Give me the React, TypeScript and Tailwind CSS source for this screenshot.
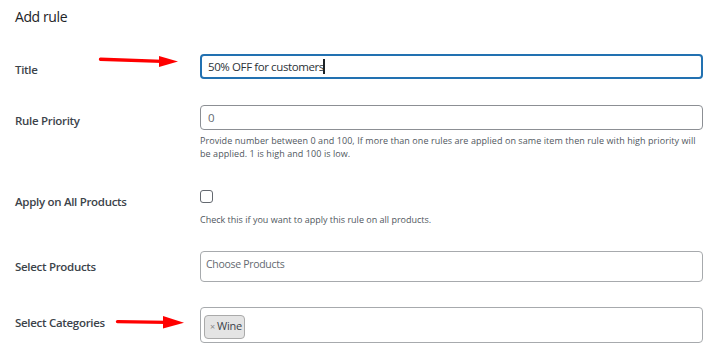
import React from "react";

function Arrow1() {
  return (
    <svg className="absolute left-[98px] top-[54px]" width="84" height="16" viewBox="0 0 84 16">
      <path d="M2.5 5.2 L64 7.4" stroke="#f00" strokeWidth="3.4" strokeLinecap="round" fill="none" />
      <path d="M61 2 L80 7.6 L61 13 Z" fill="#f00" />
    </svg>
  );
}

function Arrow2() {
  return (
    <svg className="absolute left-[115px] top-[314px]" width="72" height="16" viewBox="0 0 72 16">
      <path d="M2.5 7.6 L52 8.4" stroke="#f00" strokeWidth="3.4" strokeLinecap="round" fill="none" />
      <path d="M48 2 L69 8.8 L48 14.4 Z" fill="#f00" />
    </svg>
  );
}

export default function App() {
  const label =
    "w-[200px] shrink-0 pl-[15px] text-[11.5px] leading-[18px] font-semibold tracking-[-0.3px] text-[#3c434a]";
  const help = "text-[9px] leading-[13px] text-[#50575e]";
  return (
    <div className="relative w-[718px] h-[358px] overflow-hidden bg-white text-[#3c434a] font-['Open_Sans',sans-serif]">
      <div className="pl-[15px] pt-[7px] text-[14px] leading-[20px] tracking-[-0.4px] text-[#1d2327]">Add rule</div>

      {/* Title */}
      <div className="flex mt-[27px]">
        <div className={`${label} pt-[7px]`}>Title</div>
        <div className="w-[503px] h-[25px] rounded-[4px] border-2 border-[#2271b1] flex items-center pl-[6px] text-[11.5px] tracking-[-0.4px] text-[#2c3338]">
          <span>50% OFF for customers</span>
          <span className="w-[2px] h-[15px] bg-[#1d2327] ml-[-1px]" />
        </div>
      </div>

      {/* Priority */}
      <div className="flex mt-[26px]">
        <div className={`${label} pt-[7px]`}>Rule Priority</div>
        <div className="w-[503px]">
          <div className="h-[25px] rounded-[4px] border border-[#8c8f94] flex items-center pl-[7px] text-[11.5px] text-[#646970]">
            0
          </div>
          <p className={`mt-[4px] ${help} tracking-[0.07px] whitespace-nowrap`}>
            Provide number between 0 and 100, If more than one rules are applied on same item then rule with high priority will
            <br />
            be applied. 1 is high and 100 is low.
          </p>
        </div>
      </div>

      {/* Apply on all */}
      <div className="flex mt-[30px]">
        <div className={`${label} pt-[3px]`}>Apply on All Products</div>
        <div className="w-[503px]">
          <div className="w-[13px] h-[13px] rounded-[3px] border border-[#646970] bg-white" />
          <p className={`mt-[10px] ${help}`}>Check this if you want to apply this rule on all products.</p>
        </div>
      </div>

      {/* Select products */}
      <div className="flex mt-[25px]">
        <div className={`${label} pt-[7px]`}>Select Products</div>
        <div className="w-[503px] h-[31px] rounded-[4px] border border-[#a7aaad] pl-[5px] pt-[4px] text-[10.5px] leading-[16px] tracking-[-0.3px] text-[#646970]">
          Choose Products
        </div>
      </div>

      {/* Select categories */}
      <div className="flex mt-[25px]">
        <div className={`${label} pt-[7px]`}>Select Categories</div>
        <div className="w-[503px] h-[36px] rounded-[4px] border border-[#a7aaad] pl-[3px] pt-[4px]">
          <div className="inline-flex items-center h-[24px] w-[41px] pl-[5px] rounded-[4px] border border-[#aaa] bg-[#e4e4e4] text-[11px] tracking-[-0.2px] text-[#3c434a]">
            <span className="text-[9px] leading-none text-[#888] mr-[2px]">×</span>
            <span>Wine</span>
          </div>
        </div>
      </div>

      <Arrow1 />
      <Arrow2 />
    </div>
  );
}
